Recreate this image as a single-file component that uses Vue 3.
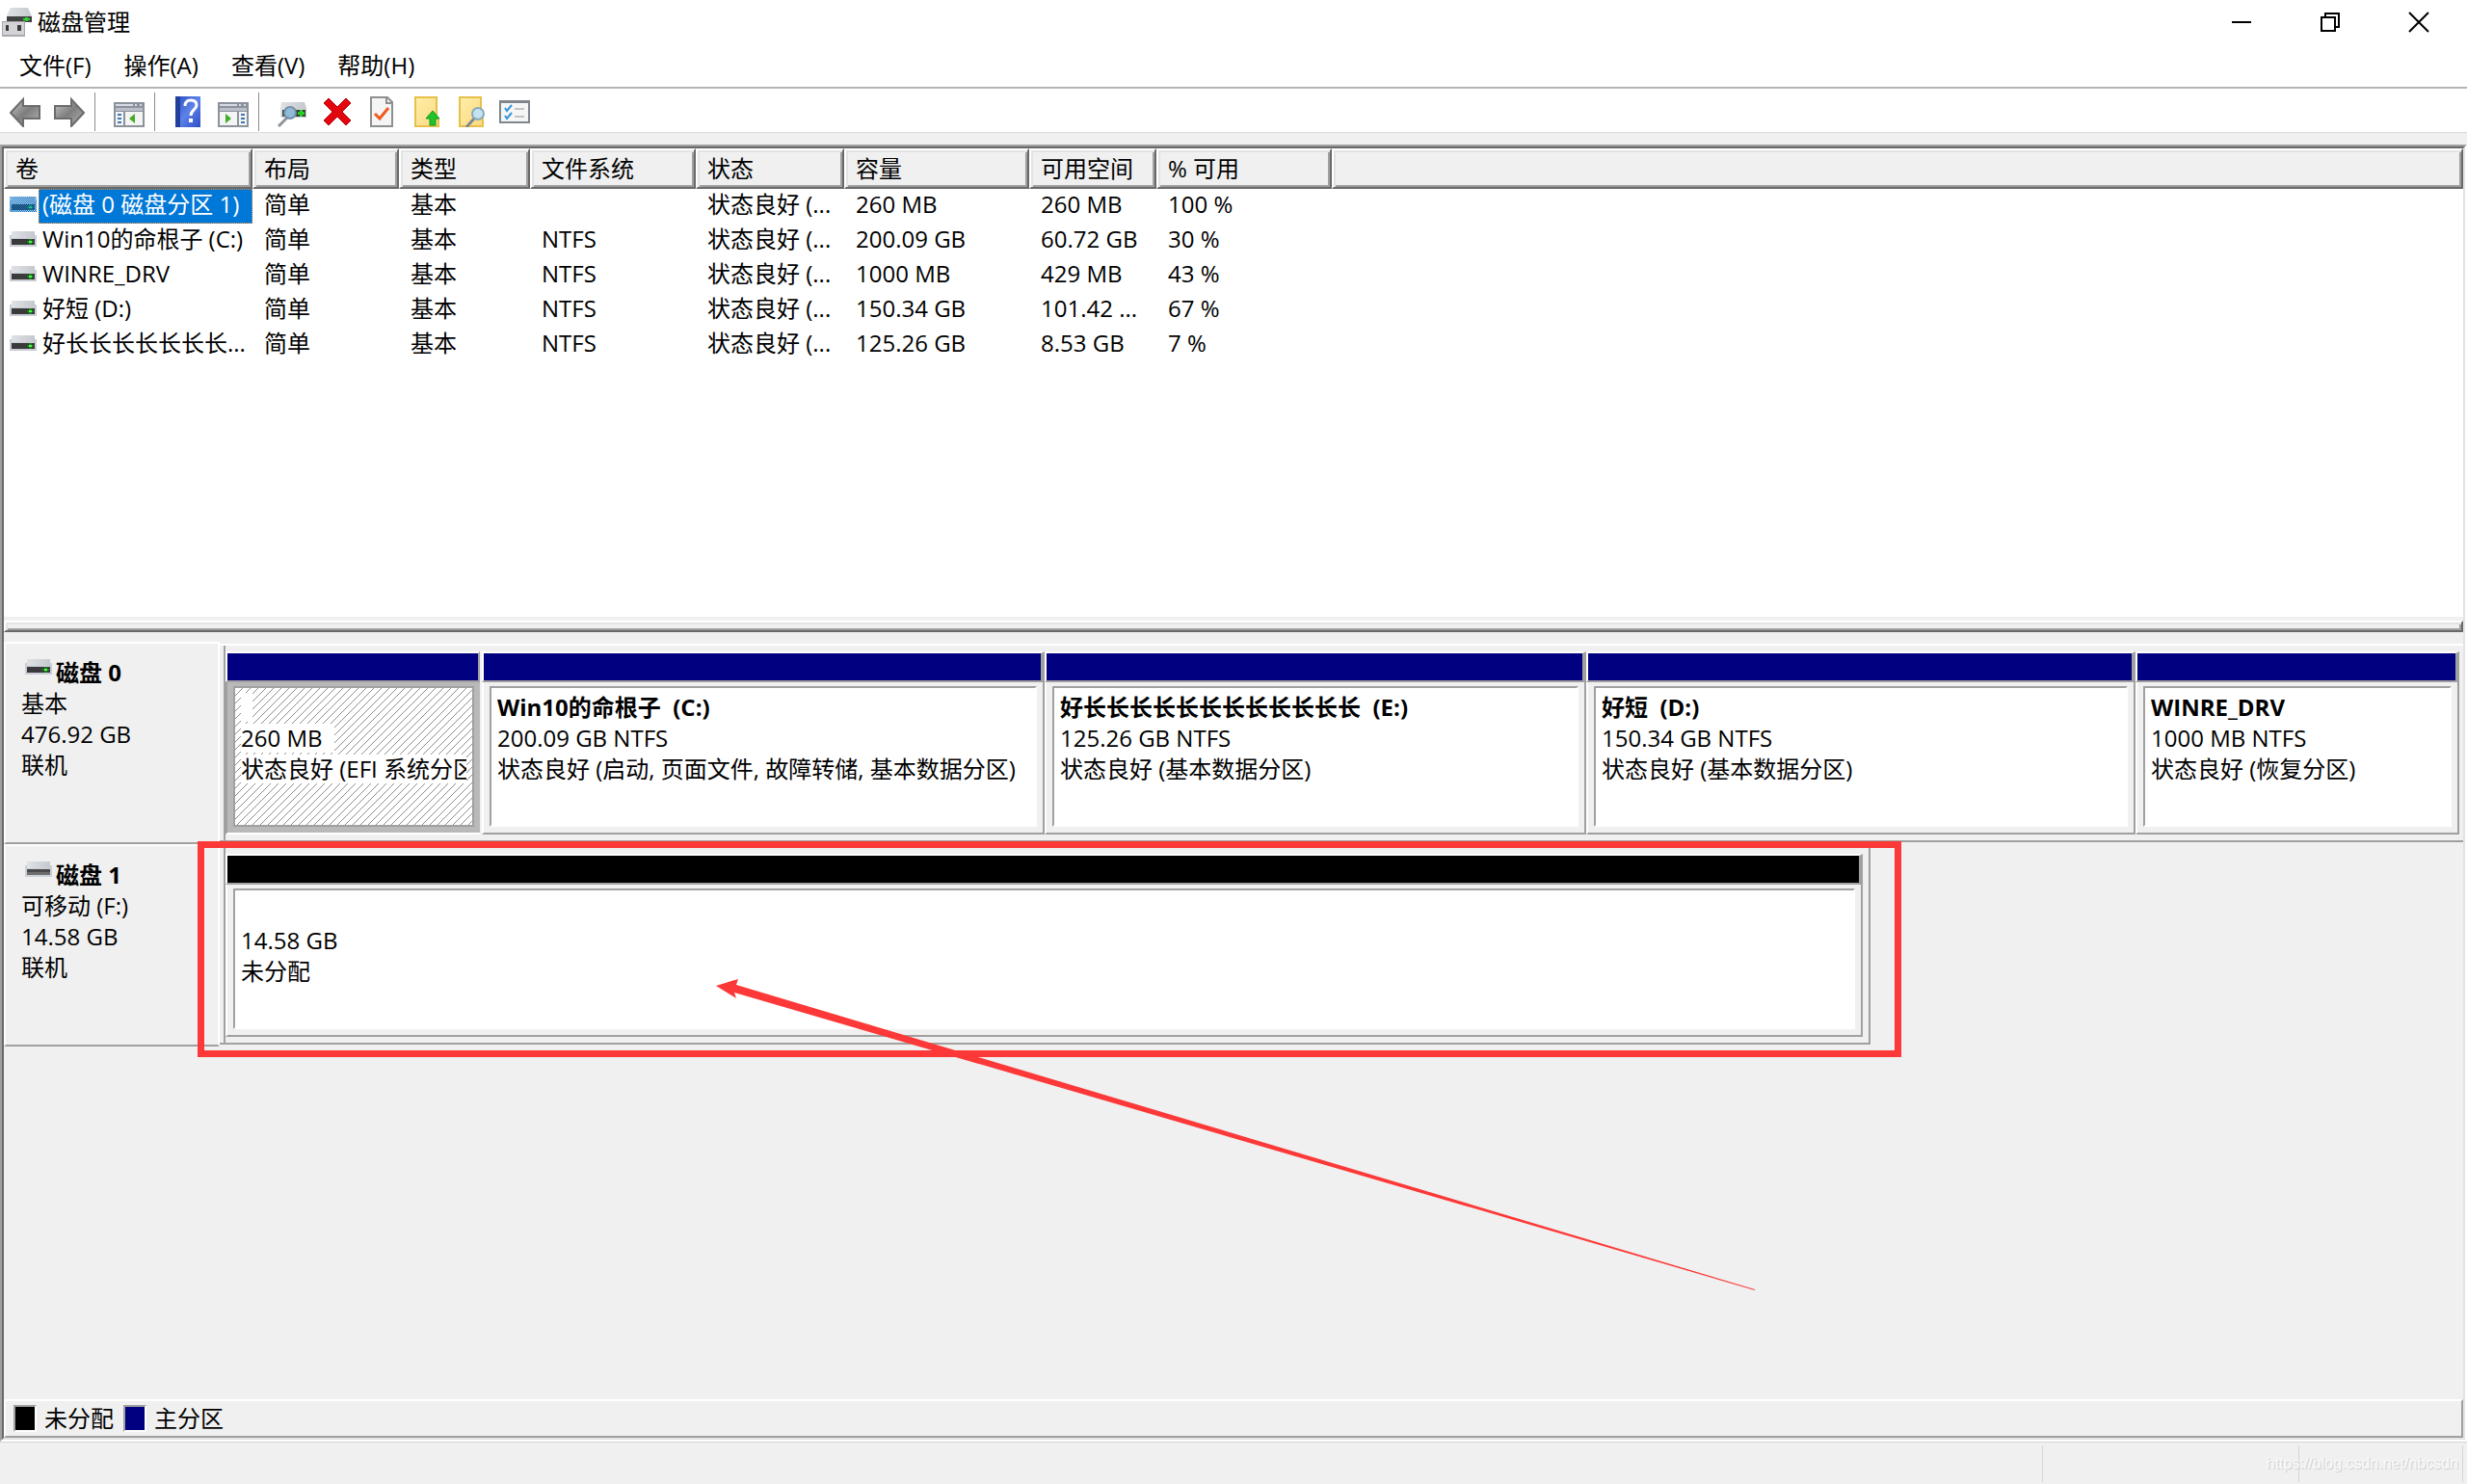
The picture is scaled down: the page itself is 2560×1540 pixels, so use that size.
<script setup>
const menus = ['文件(F)', '操作(A)', '查看(V)', '帮助(H)']

const columns = ['卷', '布局', '类型', '文件系统', '状态', '容量', '可用空间', '% 可用']

const volumes = [
  { name: '(磁盘 0 磁盘分区 1)', fs: '', size: '260 MB', free: '260 MB', pct: '100 %', selected: true },
  { name: 'Win10的命根子 (C:)', fs: 'NTFS', size: '200.09 GB', free: '60.72 GB', pct: '30 %' },
  { name: 'WINRE_DRV', fs: 'NTFS', size: '1000 MB', free: '429 MB', pct: '43 %' },
  { name: '好短 (D:)', fs: 'NTFS', size: '150.34 GB', free: '101.42 ...', pct: '67 %' },
  { name: '好长长长长长长长...', fs: 'NTFS', size: '125.26 GB', free: '8.53 GB', pct: '7 %' }
]

const disks = [
  {
    title: '磁盘 0',
    lines: ['基本', '476.92 GB', '联机'],
    online: true,
    parts: [
      { name: '  ', size: '260 MB  ', state: '状态良好 (EFI 系统分区)', weight: 264, selected: true },
      { name: 'Win10的命根子  (C:)', size: '200.09 GB NTFS', state: '状态良好 (启动, 页面文件, 故障转储, 基本数据分区)', weight: 584 },
      { name: '好长长长长长长长长长长长长  (E:)', size: '125.26 GB NTFS', state: '状态良好 (基本数据分区)', weight: 562 },
      { name: '好短  (D:)', size: '150.34 GB NTFS', state: '状态良好 (基本数据分区)', weight: 570 },
      { name: 'WINRE_DRV', size: '1000 MB NTFS', state: '状态良好 (恢复分区)', weight: 336 }
    ]
  },
  {
    title: '磁盘 1',
    lines: ['可移动 (F:)', '14.58 GB', '联机'],
    removable: true,
    marked: true,
    parts: [{ name: '', size: '14.58 GB', state: '未分配', weight: 1, free: true }]
  }
]
</script>

<template>
  <div class="window">
    <svg width="0" height="0" class="defs" aria-hidden="true">
      <defs>
        <linearGradient id="metal" x1="0" y1="0" x2="1" y2="1">
          <stop offset="0" stop-color="#c9c9c9" />
          <stop offset="0.5" stop-color="#7e7e7e" />
          <stop offset="1" stop-color="#b4b4b4" />
        </linearGradient>
        <linearGradient id="lid" x1="0" y1="0" x2="1" y2="0">
          <stop offset="0" stop-color="#dfe2e5" />
          <stop offset="1" stop-color="#c5c9cd" />
        </linearGradient>
        <linearGradient id="book" x1="0" y1="0" x2="1" y2="1">
          <stop offset="0" stop-color="#2a4cc0" />
          <stop offset="0.5" stop-color="#5d82ea" />
          <stop offset="1" stop-color="#2f4fc4" />
        </linearGradient>
        <linearGradient id="paper" x1="0" y1="0" x2="1" y2="1">
          <stop offset="0" stop-color="#ffeeaa" />
          <stop offset="1" stop-color="#fbd980" />
        </linearGradient>
        <pattern id="hatch" width="8" height="8" patternUnits="userSpaceOnUse">
          <path d="M7 0h1v1h-1zM6 1h1v1h-1zM5 2h1v1h-1zM4 3h1v1h-1zM3 4h1v1h-1zM2 5h1v1h-1zM1 6h1v1h-1zM0 7h1v1h-1z" fill="#8c8c8c" shape-rendering="crispEdges" />
        </pattern>
        <pattern id="dither" width="2" height="2" patternUnits="userSpaceOnUse">
          <path d="M0 0h1v1h-1zM1 1h1v1h-1z" fill="#0078d7" shape-rendering="crispEdges" />
        </pattern>
        <symbol id="drive" viewBox="0 0 28 16">
          <path d="M2 0h24v4h2v12H0V4h2z" fill="#c9cdd5" />
          <path d="M2 0h24v7H2z" fill="url(#lid)" />
          <path d="M2 8h24v6H2z" fill="#3a3a3a" />
          <path d="M20 8h3v6h-3zM18 10h7v2h-7z" fill="#1c7a1c" />
          <path d="M20 10h3v2h-3z" fill="#4cff4c" />
        </symbol>
        <symbol id="drive-plain" viewBox="0 0 28 16">
          <path d="M2 0h24v4h2v12H0V4h2z" fill="#ccd0d7" />
          <path d="M2 0h24v7H2z" fill="url(#lid)" />
          <path d="M2 8h24v3H2z" fill="#4a4a4a" />
          <path d="M2 11h24v3H2z" fill="#6e6e6e" />
        </symbol>
      </defs>
    </svg>

    <header class="titlebar">
      <svg class="app-icon" width="32" height="32" viewBox="0 0 32 32" aria-hidden="true">
        <path d="M9 1h18l4 9v6H5v-7z" fill="url(#lid)" />
        <path d="M5 10h26v6H5z" fill="#3f4143" />
        <path d="M24 11h3v4h-3zM22 12h7v2h-7z" fill="#2fd02f" />
        <path d="M0 15h24v16H0z" fill="#a9a9ad" />
        <path d="M1 16h22v13H1z" fill="#d3d3d7" />
        <path d="M4 19h3v6H4zM16 19h4v6h-4z" fill="#3a3a3a" />
      </svg>
      <h1>磁盘管理</h1>
      <div class="controls">
        <button type="button" aria-label="最小化">
          <svg width="22" height="22" viewBox="0 0 22 22"><path d="M1 10h20v2H1z" /></svg>
        </button>
        <button type="button" aria-label="还原">
          <svg width="22" height="22" viewBox="0 0 22 22"><path d="M2 6h14v14H2zM6 6V2h14v14h-4" fill="none" stroke="#000" stroke-width="2" /></svg>
        </button>
        <button type="button" aria-label="关闭">
          <svg width="22" height="22" viewBox="0 0 22 22"><path d="M1 1l20 20M21 1L1 21" fill="none" stroke="#000" stroke-width="2" /></svg>
        </button>
      </div>
    </header>

    <nav class="menubar">
      <button v-for="m in menus" :key="m" type="button">{{ m }}</button>
    </nav>

    <div class="toolbar" role="toolbar">
      <button type="button" aria-label="后退">
        <svg width="32" height="32" viewBox="0 0 32 32"><path d="M1 17L14 3v7h17v13H14v8z" fill="url(#metal)" stroke="#6c6c6c" stroke-width="2" /></svg>
      </button>
      <button type="button" aria-label="前进">
        <svg width="32" height="32" viewBox="0 0 32 32"><path d="M31 17L18 3v7H1v13h17v8z" fill="url(#metal)" stroke="#6c6c6c" stroke-width="2" /></svg>
      </button>
      <span class="sep"></span>
      <button type="button" aria-label="显示控制台树">
        <svg width="32" height="32" viewBox="0 0 32 32">
          <path d="M0 6h32v26H0z" fill="#8b929b" />
          <path d="M2 8h18v2H2zM22 8h2v2h-2zM27 8h2v2h-2z" fill="#d5dce6" />
          <path d="M2 12h28v3H2z" fill="#b9c0c9" />
          <path d="M2 16h8v14H2zM12 16h18v14H12z" fill="#f4f4f4" />
          <path d="M4 18h4v2H4zM4 22h4v2H4zM4 26h4v2H4z" fill="#3c78b8" />
          <path d="M22 18v10l-6-5z" fill="#42ac28" />
        </svg>
      </button>
      <span class="sep"></span>
      <button type="button" aria-label="帮助">
        <svg width="32" height="32" viewBox="0 0 32 32">
          <path d="M2 0h26v32H2z" fill="url(#book)" />
          <path d="M2 0h5v32H2z" fill="#233f9c" />
          <path d="M12 10c0-4 2-6 6-6s6 2 6 5c0 5-6 5-6 11" fill="none" stroke="#fff" stroke-width="3" />
          <path d="M16 23h4v4h-4z" fill="#fff" />
        </svg>
      </button>
      <button type="button" aria-label="显示操作窗格">
        <svg width="32" height="32" viewBox="0 0 32 32">
          <path d="M0 6h32v26H0z" fill="#8b929b" />
          <path d="M2 8h18v2H2zM22 8h2v2h-2zM27 8h2v2h-2z" fill="#d5dce6" />
          <path d="M2 12h28v3H2z" fill="#b9c0c9" />
          <path d="M2 16h18v14H2zM22 16h8v14h-8z" fill="#f4f4f4" />
          <path d="M24 18h4v2h-4zM24 22h4v2h-4zM24 26h4v2h-4z" fill="#3c78b8" />
          <path d="M8 18v10l6-5z" fill="#42ac28" />
        </svg>
      </button>
      <span class="sep"></span>
      <button type="button" aria-label="重新扫描磁盘">
        <svg width="32" height="32" viewBox="0 0 32 32">
          <path d="M4 6h24l2 6v10H3V12z" fill="url(#lid)" />
          <path d="M5 14h24v7H5z" fill="#3b3b3b" />
          <path d="M23 14h3v7h-3zM21 16h7v3h-7z" fill="#24d024" />
          <path d="M1 31l9-9" stroke="#8e9499" stroke-width="3" />
          <circle cx="13" cy="17" r="6" fill="#8fbbd8" stroke="#7390a6" stroke-width="2" />
        </svg>
      </button>
      <button type="button" aria-label="删除">
        <svg width="32" height="32" viewBox="0 0 32 32"><path d="M7 2l9 9 9-9 5 5-9 9 9 9-5 5-9-9-9 9-5-5 9-9-9-9z" fill="#e2060f" stroke="#b60008" /></svg>
      </button>
      <button type="button" aria-label="属性">
        <svg width="32" height="32" viewBox="0 0 32 32">
          <path d="M5 1h17l5 5v25H5z" fill="#f5f5f5" stroke="#8f8f8f" stroke-width="2" />
          <path d="M21 1v6h6" fill="none" stroke="#8f8f8f" stroke-width="2" />
          <path d="M9 18l5 5 9-11" fill="none" stroke="#f05a1e" stroke-width="3" />
        </svg>
      </button>
      <button type="button" aria-label="向上">
        <svg width="32" height="32" viewBox="0 0 32 32">
          <path d="M5 1h22v22h2v8H5z" fill="url(#paper)" stroke="#e6c04a" stroke-width="2" />
          <path d="M23 15l7 8h-4v7h-6v-7h-4z" fill="#1fc42a" stroke="#139a1c" />
        </svg>
      </button>
      <button type="button" aria-label="查找">
        <svg width="32" height="32" viewBox="0 0 32 32">
          <path d="M5 1h22v22h2v8H5z" fill="url(#paper)" stroke="#e6c04a" stroke-width="2" />
          <path d="M12 32l8-9" stroke="#7d8a92" stroke-width="3" />
          <circle cx="24" cy="18" r="6" fill="#c3e2f2" stroke="#8aa9bb" stroke-width="2" />
        </svg>
      </button>
      <button type="button" aria-label="列表">
        <svg width="32" height="32" viewBox="0 0 32 32">
          <path d="M1 5h30v22H1z" fill="#f6f6f6" stroke="#7f868e" stroke-width="2" />
          <path d="M2 4h28v3H2z" fill="#7f868e" />
          <path d="M16 12h10v2H16zM16 20h10v2H16z" fill="#c3c3c3" />
          <path d="M6 12l2 3 5-6M6 20l2 3 5-6" fill="none" stroke="#3596dc" stroke-width="2" />
        </svg>
      </button>
    </div>

    <main class="pane">
      <div class="inner">
        <section class="list">
          <table>
            <colgroup>
              <col class="c-name" /><col class="c-layout" /><col class="c-type" /><col class="c-fs" />
              <col class="c-state" /><col class="c-size" /><col class="c-free" /><col class="c-pct" /><col />
            </colgroup>
            <thead>
              <tr>
                <th v-for="c in columns" :key="c" scope="col" class="raised">{{ c }}</th>
                <th class="raised"></th>
              </tr>
            </thead>
            <tbody>
              <tr v-for="v in volumes" :key="v.name" :class="{ selected: v.selected }">
                <td class="name">
                  <div class="volume">
                    <svg width="28" height="16" viewBox="0 0 28 16" aria-hidden="true">
                      <use href="#drive" width="28" height="16" />
                      <rect v-if="v.selected" width="28" height="16" fill="url(#dither)" />
                    </svg>
                    <span>{{ v.name }}</span>
                  </div>
                </td>
                <td>简单</td>
                <td>基本</td>
                <td>{{ v.fs }}</td>
                <td>状态良好 (...</td>
                <td>{{ v.size }}</td>
                <td>{{ v.free }}</td>
                <td>{{ v.pct }}</td>
                <td></td>
              </tr>
            </tbody>
          </table>
        </section>

        <div class="splitter"><div class="grip raised"></div></div>

        <section class="graph">
          <div v-for="d in disks" :key="d.title" class="disk" :class="{ removable: d.removable }">
            <div class="label">
              <h2>
                <svg width="28" height="16" viewBox="0 0 28 16" aria-hidden="true">
                  <use :href="d.online ? '#drive' : '#drive-plain'" width="28" height="16" />
                </svg>
                {{ d.title }}
              </h2>
              <p v-for="l in d.lines" :key="l">{{ l }}</p>
            </div>
            <div class="space">
              <div class="frame">
                <div class="track">
                  <div
                    v-for="p in d.parts"
                    :key="p.size"
                    class="part"
                    :class="{ chosen: p.selected, free: p.free }"
                    :style="{ flexGrow: p.weight }"
                  >
                    <div class="bar"></div>
                    <div class="body">
                      <div class="sunken">
                        <svg v-if="p.selected" class="hatch" aria-hidden="true"><rect width="100%" height="100%" fill="url(#hatch)" /></svg>
                        <p class="line strong">{{ p.name }}</p>
                        <p class="line">{{ p.size }}</p>
                        <p class="line">{{ p.state }}</p>
                      </div>
                    </div>
                  </div>
                </div>
              </div>
            </div>
            <template v-if="d.marked">
              <div class="mark"></div>
              <svg class="arrow" width="1090" height="334" viewBox="0 0 1090 334" aria-hidden="true">
                <path d="M6 12L29 5l-2 6L1084 327v1L25 19l2 6z" fill="#fd3838" />
              </svg>
            </template>
          </div>
        </section>

        <footer class="legend">
          <span class="swatch black"></span><span>未分配</span>
          <span class="swatch navy"></span><span>主分区</span>
        </footer>
      </div>
    </main>

    <div class="status">
      <span class="cell"></span>
      <span class="cell mid"></span>
      <span class="cell end"><span class="credit">https://blog.csdn.net/nbcsdn</span></span>
    </div>
  </div>
</template>

<style>
body {
  margin: 0;
  background: #f0f0f0;
}
</style>

<style scoped>
.window {
  display: flex;
  flex-direction: column;
  min-height: 100vh;
  background: #f0f0f0;
  color: #000;
  font: 24px/32px "Open Sans", "Noto Sans CJK SC", sans-serif;
}
.window * {
  box-sizing: border-box;
}
.defs {
  position: absolute;
}
h1,
h2,
p {
  margin: 0;
  font-size: inherit;
}
button {
  margin: 0;
  padding: 0;
  border: 0;
  background: none;
  font: inherit;
  color: inherit;
}
svg {
  display: block;
  flex: none;
}

.titlebar {
  display: flex;
  align-items: center;
  height: 48px;
  padding: 0 4px 2px 2px;
  background: #fff;
}
.titlebar h1 {
  margin-left: 5px;
  font-weight: 400;
}
.controls {
  display: flex;
  margin-left: auto;
}
.controls button {
  display: flex;
  align-items: center;
  justify-content: center;
  width: 92px;
  height: 44px;
}

.menubar {
  display: flex;
  gap: 34px;
  height: 44px;
  padding: 4px 20px 0;
  background: #fff;
  border-bottom: 2px solid #b4b4b4;
}
.menubar button {
  height: 32px;
}

.toolbar {
  display: flex;
  gap: 14px;
  height: 46px;
  padding: 8px 10px 0;
  background: #fff;
  border-bottom: 1px solid #dadada;
}
.toolbar button {
  height: 32px;
}
.sep {
  width: 1px;
  height: 40px;
  margin: -4px 5px 0 -4px;
  background: #8c8c8c;
}

.pane {
  display: flex;
  flex: 1;
  margin-top: 12px;
  border: 2px solid;
  border-color: #a0a0a0 #fff #fff #a0a0a0;
}
.inner {
  display: flex;
  flex: 1;
  flex-direction: column;
  min-width: 0;
  border: 2px solid;
  border-color: #696969 #e3e3e3 #e3e3e3 #696969;
}
.raised {
  border: 2px solid;
  border-color: #fff #696969 #696969 #fff;
  box-shadow: inset 2px 2px #e3e3e3, inset -2px -2px #a0a0a0;
  background: #f0f0f0;
}

.list {
  flex: 486 1 0;
  background: #fff;
}
table {
  width: 100%;
  table-layout: fixed;
  border-spacing: 0;
}
.c-name { width: 258px; }
.c-layout { width: 152px; }
.c-type { width: 136px; }
.c-fs { width: 172px; }
.c-state { width: 154px; }
.c-size { width: 192px; }
.c-free { width: 132px; }
.c-pct { width: 182px; }
th {
  height: 42px;
  padding: 0 10px;
  font-weight: 400;
  text-align: left;
  white-space: nowrap;
}
td {
  height: 36px;
  padding: 0 0 4px 12px;
  white-space: nowrap;
}
td.name {
  padding: 0;
}
.volume {
  display: flex;
  gap: 2px;
  height: 36px;
  padding-left: 6px;
}
.volume svg {
  margin-top: 8px;
}
.volume span {
  flex: 1;
  padding: 0 0 2px 4px;
}
.selected .volume span {
  padding: 0 0 0 3px;
  border: 1px dotted #e08a3c;
  background: #0078d7;
  color: #fff;
  line-height: 30px;
}

.splitter {
  height: 16px;
  padding-top: 4px;
}
.grip {
  height: 12px;
}

.graph {
  flex: 786 1 0;
  padding-top: 10px;
}
.disk {
  position: relative;
  display: flex;
  height: 210px;
}
.label {
  width: 224px;
  padding: 14px 16px;
  border: 2px solid;
  border-color: #fff #fff #a0a0a0;
}
.label h2 {
  display: flex;
  gap: 4px;
  padding-left: 4px;
  font-weight: 700;
}
.label h2 svg {
  margin-top: 2px;
}
.space {
  flex: 1;
  min-width: 0;
  padding: 2px 0;
}
.frame {
  height: 206px;
  padding-left: 4px;
  border-top: 2px solid #fff;
  border-bottom: 2px solid #a0a0a0;
}
.removable .frame {
  width: 73.6%;
  border-right: 2px solid #a0a0a0;
}
.track {
  display: flex;
  height: 100%;
  padding: 6px 4px 6px 0;
  border-left: 2px solid #a0a0a0;
}
.removable .track {
  padding-right: 6px;
}
.part {
  display: flex;
  flex: 1 1 0;
  flex-direction: column;
  min-width: 0;
}
.bar {
  height: 32px;
  border: solid;
  border-width: 2px 4px 2px 2px;
  border-color: #fff #a0a0a0 #a0a0a0 #fff;
  background: #000080;
}
.free .bar {
  background: #000;
}
.body {
  flex: 1;
  min-height: 0;
  padding: 4px 6px 6px;
  border: solid;
  border-width: 0 2px 2px;
  border-color: #a0a0a0 #a0a0a0 #a0a0a0 #fff;
}
.sunken {
  position: relative;
  height: 100%;
  padding: 4px 6px;
  overflow: hidden;
  border: 2px solid;
  border-color: #a0a0a0 #fff #fff #a0a0a0;
  background: #fff;
}
.chosen {
  padding-right: 2px;
}
.chosen .bar {
  border-right-width: 2px;
}
.chosen .body {
  padding-right: 6px;
  border-width: 0 0 2px 2px;
  border-color: #fff #fff #fff #a0a0a0;
  background: #b9b9b9;
}
.chosen .sunken {
  border-color: #a0a0a0;
}
.hatch {
  position: absolute;
  inset: 0;
  width: 100%;
  height: 100%;
}
.line {
  position: relative;
  width: fit-content;
  max-width: 100%;
  height: 32px;
  padding: 1px 0;
  overflow: hidden;
  background: #fff content-box;
  line-height: 30px;
  white-space: pre;
}
.strong {
  font-weight: 700;
}

.mark {
  position: absolute;
  top: -3px;
  left: 201px;
  width: 1768px;
  height: 224px;
  border: 7px solid #fd3838;
}
.arrow {
  position: absolute;
  top: 135px;
  left: 733px;
}

.legend {
  display: flex;
  align-items: center;
  gap: 8px;
  height: 40px;
  padding-left: 6px;
  border: 2px solid;
  border-color: #fff #a0a0a0 #a0a0a0 #fff;
}
.swatch {
  width: 24px;
  height: 28px;
  border: 2px solid;
  border-color: #a0a0a0 #fff #fff #a0a0a0;
}
.black {
  background: #000;
}
.navy {
  background: #000080;
}
.navy,
.black {
  margin-left: 2px;
}

.status {
  display: flex;
  height: 44px;
  padding: 3px 4px 2px 0;
  border-top: 1px solid #d5d5d5;
}
.cell {
  flex: 1;
  border-right: 1px solid #d5d5d5;
}
.mid {
  flex: none;
  width: 266px;
}
.end {
  display: flex;
  flex: none;
  align-items: center;
  justify-content: flex-end;
  width: 170px;
  padding-right: 4px;
}
.credit {
  flex: none;
  color: #fafafa;
  font: 16px/20px "Liberation Sans", sans-serif;
  text-shadow: 1px 1px #cfcfcf;
}
</style>
